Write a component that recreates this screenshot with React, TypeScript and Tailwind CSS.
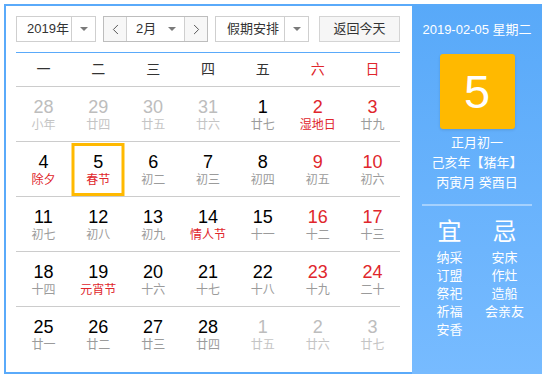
import { ChevronLeft, ChevronRight } from 'lucide-react';

type Day = {
  n: number;
  l: string;
  other?: boolean;
  redNum?: boolean;
  redLunar?: boolean;
  selected?: boolean;
};

const WEEKDAYS = ['一', '二', '三', '四', '五', '六', '日'];

const ROWS: Day[][] = [
  [
    { n: 28, l: '小年', other: true },
    { n: 29, l: '廿四', other: true },
    { n: 30, l: '廿五', other: true },
    { n: 31, l: '廿六', other: true },
    { n: 1, l: '廿七' },
    { n: 2, l: '湿地日', redNum: true, redLunar: true },
    { n: 3, l: '廿九', redNum: true },
  ],
  [
    { n: 4, l: '除夕', redLunar: true },
    { n: 5, l: '春节', redLunar: true, selected: true },
    { n: 6, l: '初二' },
    { n: 7, l: '初三' },
    { n: 8, l: '初四' },
    { n: 9, l: '初五', redNum: true },
    { n: 10, l: '初六', redNum: true },
  ],
  [
    { n: 11, l: '初七' },
    { n: 12, l: '初八' },
    { n: 13, l: '初九' },
    { n: 14, l: '情人节', redLunar: true },
    { n: 15, l: '十一' },
    { n: 16, l: '十二', redNum: true },
    { n: 17, l: '十三', redNum: true },
  ],
  [
    { n: 18, l: '十四' },
    { n: 19, l: '元宵节', redLunar: true },
    { n: 20, l: '十六' },
    { n: 21, l: '十七' },
    { n: 22, l: '十八' },
    { n: 23, l: '十九', redNum: true },
    { n: 24, l: '二十', redNum: true },
  ],
  [
    { n: 25, l: '廿一' },
    { n: 26, l: '廿二' },
    { n: 27, l: '廿三' },
    { n: 28, l: '廿四' },
    { n: 1, l: '廿五', other: true },
    { n: 2, l: '廿六', other: true },
    { n: 3, l: '廿七', other: true },
  ],
];

const YI = ['纳采', '订盟', '祭祀', '祈福', '安香'];
const JI = ['安床', '作灶', '造船', '会亲友'];

function Caret() {
  return (
    <svg width="8" height="4" viewBox="0 0 8 4" className="block">
      <path d="M0 0 L8 0 L4 4 Z" fill="#7a7a7a" />
    </svg>
  );
}

function DayCell({ d }: { d: Day }) {
  const numColor = d.other ? 'text-[#bdbdbd]' : d.redNum ? 'text-[#e0262c]' : 'text-black';
  const lunarColor = d.other ? 'text-[#c4c4c4]' : d.redLunar ? 'text-[#e0262c]' : 'text-[#9b9b9b]';
  return (
    <div className="relative flex flex-col items-center pt-[10px]">
      {d.selected && (
        <div className="absolute left-1/2 top-[1px] h-[53px] w-[53px] -translate-x-1/2 border-[3px] border-[#ffb900]" />
      )}
      <div className={`text-[18px] leading-[20px] ${numColor}`}>{d.n}</div>
      <div className={`text-[12px] leading-[16px] ${lunarColor}`}>{d.l}</div>
    </div>
  );
}

export default function App() {
  return (
    <div
      className="p-1 text-[#333]"
      style={{ fontFamily: '"Liberation Sans", "Noto Sans CJK SC", sans-serif' }}
    >
      <div className="flex h-[370px] w-[538px]">
        {/* Calendar */}
        <div className="w-[408px] border-2 border-r-0 border-[#5aaafa] pl-[10px] pr-[12px] pt-[10px]">
          {/* Toolbar */}
          <div className="flex h-[26px] text-[13px]">
            <div className="flex w-[80px] border border-[#cfcfcf] bg-white">
              <div className="flex flex-1 items-center pl-[10px]">2019年</div>
              <div className="flex w-[24px] items-center justify-center border-l border-[#cfcfcf]">
                <Caret />
              </div>
            </div>
            <div className="ml-[7px] flex w-[105px] border border-[#bdbdbd]">
              <div className="flex w-[22px] items-center justify-center bg-[#f7f7f7]">
                <ChevronLeft size={17} strokeWidth={1.4} color="#555" />
              </div>
              <div className="flex flex-1 items-center border-x border-[#cfcfcf] bg-white pl-[9px] pr-[8px]">
                <span className="flex-1">2月</span>
                <Caret />
              </div>
              <div className="flex w-[22px] items-center justify-center bg-[#f7f7f7]">
                <ChevronRight size={17} strokeWidth={1.4} color="#555" />
              </div>
            </div>
            <div className="ml-[7px] flex w-[94px] border border-[#cfcfcf] bg-white">
              <div className="flex flex-1 items-center pl-[11px]">假期安排</div>
              <div className="flex w-[24px] items-center justify-center border-l border-[#cfcfcf]">
                <Caret />
              </div>
            </div>
            <div className="ml-[10px] flex w-[81px] items-center justify-center border border-[#d4d4d4] bg-[#f6f6f6]">
              返回今天
            </div>
          </div>

          <div className="mt-[10px] h-px bg-[#5aaafa]" />

          {/* Weekday header */}
          <div className="grid h-[34px] grid-cols-7 items-center border-b border-[#cccccc] text-[14px]">
            {WEEKDAYS.map((w, i) => (
              <div key={w} className={`text-center ${i >= 5 ? 'text-[#e0262c]' : 'text-[#333]'}`}>
                {w}
              </div>
            ))}
          </div>

          {/* Days */}
          {ROWS.map((row, r) => (
            <div
              key={r}
              className={`grid h-[55px] grid-cols-7 ${r < ROWS.length - 1 ? 'border-b border-[#cccccc]' : ''}`}
            >
              {row.map((d, i) => (
                <DayCell key={i} d={d} />
              ))}
            </div>
          ))}
        </div>

        {/* Side panel */}
        <div className="flex w-[130px] flex-col items-center bg-gradient-to-b from-[#58a9f9] to-[#77bbff] pt-[17px] text-white">
          <div className="text-[13px] leading-[18px]">2019-02-05 星期二</div>
          <div className="mt-[15px] flex h-[75px] w-[75px] items-center justify-center rounded-[3px] bg-[#ffb900] shadow-[0_1px_3px_rgba(0,0,0,0.12)]">
            <span className="text-[47px] leading-none">5</span>
          </div>
          <div className="mt-[4px] text-center text-[13px] leading-[20px]">
            <div>正月初一</div>
            <div>己亥年【猪年】</div>
            <div>丙寅月 癸酉日</div>
          </div>
          <div className="mt-[11px] h-[2px] w-[110px] bg-white/40" />
          <div className="mt-[12px] grid w-[110px] grid-cols-2 text-center">
            <div>
              <div className="text-[24px] leading-[28px]">宜</div>
              <div className="mt-[3px] text-[13px] leading-[18px]">
                {YI.map((t) => (
                  <div key={t}>{t}</div>
                ))}
              </div>
            </div>
            <div>
              <div className="text-[24px] leading-[28px]">忌</div>
              <div className="mt-[3px] text-[13px] leading-[18px]">
                {JI.map((t) => (
                  <div key={t}>{t}</div>
                ))}
              </div>
            </div>
          </div>
        </div>
      </div>
    </div>
  );
}
